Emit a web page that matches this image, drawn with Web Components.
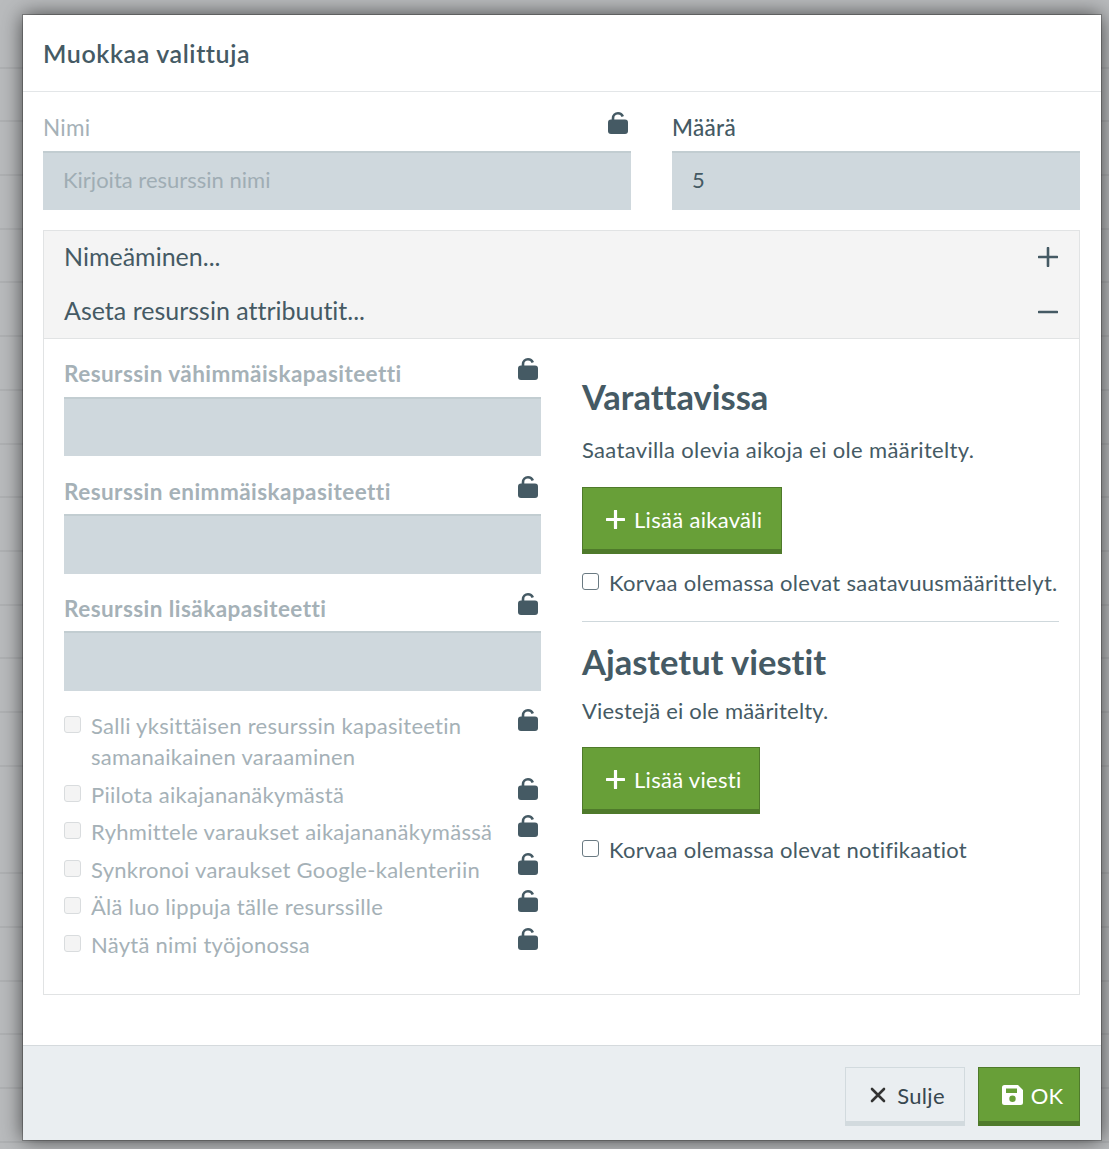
<!DOCTYPE html>
<html lang="fi">
<head>
<meta charset="utf-8">
<title>Muokkaa valittuja</title>
<style>
    html, body { margin: 0; height: 100%; }
    body {
        height: 1149px;
        overflow: hidden;
        font-family: Lato, "Open Sans", sans-serif;
        font-variant-ligatures: none;
        color: #455a64;
        background-color: #b9bbbd;
        background-image: repeating-linear-gradient(to bottom, transparent 0, transparent 52.7px, #a4a6a8 52.7px, #a4a6a8 53.7px);
        background-position: 0 14.500px;
    }
</style>
</head>
<body>
<template id="lock-tpl">
    <style>
        :host { display: inline-block; flex: none; width: 20px; height: 22px; color: #455a64; }
        svg { display: block; width: 100%; height: 100%; }
    </style>
    <svg viewBox="0 0 20 22">
        <path d="M5 8.500V6.300C5 3.200 7.200 1.300 10 1.300c2.200 0 3.900 1 4.800 3.200" fill="none" stroke="currentColor" stroke-width="2.600"/>
        <rect x="0" y="7.500" width="20" height="14.500" rx="3" fill="currentColor"/>
    </svg>
</template>

<script>
class LockIcon extends HTMLElement {
    constructor(){
        super();
        this.attachShadow({mode: 'open'});
        this.shadowRoot.appendChild(document.getElementById('lock-tpl').content.cloneNode(true));
    }
}

class TextField extends HTMLElement {
    constructor(){
        super();
        this.attachShadow({mode: 'open'});
        this.shadowRoot.innerHTML = `
        <style>
            :host { display: block; }
            .head { display: flex; justify-content: space-between; align-items: flex-end; height: var(--head, 58px); }
            label { font-size: 22.5px; font-weight: 500; letter-spacing: .3px; line-height: 25px; margin-bottom: var(--label-gap, 11px); }
            :host([disabled]) label { color: #a5b1b7; font-weight: 400; }
            :host([strong]) label { font-weight: 700; letter-spacing: .45px; }
            ::slotted(wc-lock) { margin: 0 3px var(--lock-gap, 17px) 0; }
            .box {
                box-sizing: border-box;
                height: var(--box, 59px);
                background: #cfd8dd;
                border-top: 2px solid #c2cdd1;
                padding: 0 20px 5px;
                display: flex;
                align-items: center;
                font-size: 22px;
            }
            .ph { color: #9fadb4; }
        </style>
        <div class="head"><label></label><slot name="lock"></slot></div>
        <div class="box"><span class="val"></span></div>`;
    }

    connectedCallback(){
        this.shadowRoot.querySelector('label').textContent = this.getAttribute('label');
        const val = this.shadowRoot.querySelector('.val');
        if(this.hasAttribute('placeholder')) {
            val.textContent = this.getAttribute('placeholder');
            val.className = 'val ph';
        }
        if(this.hasAttribute('value')) {
            val.textContent = this.getAttribute('value');
        }
    }
}

class CheckRow extends HTMLElement {
    constructor(){
        super();
        this.attachShadow({mode: 'open'});
        this.shadowRoot.innerHTML = `
        <style>
            :host { display: flex; align-items: flex-start; font-size: 22px; letter-spacing: .27px; line-height: 31px; }
            .check {
                box-sizing: border-box;
                flex: none;
                width: 17px;
                height: 17px;
                margin: 6px 10px 0 0;
                border: 1.5px solid #6a7a82;
                border-radius: 3px;
                background: #fff;
            }
            :host([disabled]) { color: #a5b1b7; }
            :host([disabled]) .check { border-color: #d9dcde; background: #f4f4f4; }
            .text { flex: 1; }
            ::slotted(wc-lock) { margin: -1px 3px 0 0; }
        </style>
        <span class="check"></span>
        <span class="text"><slot></slot></span>
        <slot name="lock"></slot>`;
    }
}

class ActionButton extends HTMLElement {
    constructor(){
        super();
        this.attachShadow({mode: 'open'});
        this.shadowRoot.innerHTML = `
        <style>
            :host {
                display: inline-flex;
                box-sizing: border-box;
                align-items: center;
                height: 67px;
                padding: 2px 19px 0 23px;
                gap: 9px;
                font-size: 22px;
                letter-spacing: .3px;
                color: #fff;
                background: #689f38;
                border: 1px solid #4f7a2b;
                border-bottom: 5px solid #4f7a2b;
            }
            :host([plain]) {
                color: #37474f;
                background: #eaeef1;
                border-color: #d2dade;
                border-bottom-color: #d2dade;
            }
            ::slotted(svg) { display: block; flex: none; }
        </style>
        <slot name="icon"></slot><slot></slot>`;
    }
}

class AccordionRow extends HTMLElement {
    constructor(){
        super();
        this.attachShadow({mode: 'open'});
        this.shadowRoot.innerHTML = `
        <style>
            :host {
                display: flex;
                align-items: center;
                justify-content: space-between;
                height: 54px;
                padding: 0 21px 0 20px;
                font-size: 25px;
                color: #455a64;
            }
            span { margin-bottom: 4px; }
            ::slotted(svg) { display: block; }
        </style>
        <span><slot></slot></span><slot name="icon"></slot>`;
    }
}

class EditModal extends HTMLElement {
    constructor(){
        super();
        this.attachShadow({mode: 'open'});
        this.shadowRoot.innerHTML = `
        <style>
            :host {
                display: flex;
                flex-direction: column;
                box-sizing: border-box;
                width: 1078px;
                height: 1125px;
                margin: 15px 0 0 23px;
                background: #fff;
                box-shadow: 0 0 0 1px rgba(0,0,0,.25), 0 0 20px rgba(0,0,0,.65);
            }
            header {
                box-sizing: border-box;
                height: 77px;
                padding: 0 20px;
                display: flex;
                align-items: center;
                border-bottom: 1px solid #e3e6e8;
                font-size: 25px;
                font-weight: 600;
                letter-spacing: .6px;
            }
            main { flex: 1; padding: 0 21px 0 20px; }
            footer {
                box-sizing: border-box;
                height: 95px;
                background: #eaeef1;
                border-top: 1px solid #d5dadd;
                padding: 21px 21px 0 0;
                display: flex;
                justify-content: flex-end;
                gap: 13px;
            }
        </style>
        <header><slot name="title"></slot></header>
        <main><slot></slot></main>
        <footer><slot name="footer"></slot></footer>`;
    }
}

customElements.define('wc-lock', LockIcon);
customElements.define('wc-field', TextField);
customElements.define('wc-check', CheckRow);
customElements.define('wc-button', ActionButton);
customElements.define('wc-accordion-row', AccordionRow);
customElements.define('wc-modal', EditModal);
</script>

<style>
    .top { display: grid; grid-template-columns: 588px 408px; column-gap: 41px; padding-top: 1px; }
    .panel { margin-top: 20px; border: 1px solid #e1e3e4; }
    .panel-head { background: #f4f4f4; border-bottom: 1px solid #e1e3e4; }
    .panel-head wc-accordion-row + wc-accordion-row { height: 53px; }
    .panel-body { display: grid; grid-template-columns: 477px 477px; column-gap: 41px; padding: 0 20px; height: 655px; }
    .checks { margin-top: 19px; display: flex; flex-direction: column; gap: 6.6px; }
    h2 { margin: 0; font-size: 34.500px; font-weight: 700; line-height: 40px; color: #455a64; }
    p { margin: 0; font-size: 22px; letter-spacing: .33px; line-height: 30px; }
    hr { border: 0; border-top: 1px solid #cfd8dc; margin: 23px 0 20px; }
    .tall { --box: 60px; --label-gap: 10px; --lock-gap: 16px; }
</style>

<wc-modal>
    <span slot="title">Muokkaa valittuja</span>

    <div class="top">
        <wc-field disabled label="Nimi" placeholder="Kirjoita resurssin nimi"><wc-lock slot="lock"></wc-lock></wc-field>
        <wc-field label="Määrä" value="5"></wc-field>
    </div>

    <div class="panel">
        <div class="panel-head">
            <wc-accordion-row>Nimeäminen...
                <svg slot="icon" style="margin-bottom:2px" width="20" height="20" viewBox="0 0 20 20"><path d="M10 1v18M1 10h18" stroke="#455a64" stroke-width="2.600" stroke-linecap="round"/></svg>
            </wc-accordion-row>
            <wc-accordion-row>Aseta resurssin attribuutit...
                <svg slot="icon" width="20" height="20" viewBox="0 0 20 20"><path d="M1 10h18" stroke="#455a64" stroke-width="2.600" stroke-linecap="round"/></svg>
            </wc-accordion-row>
        </div>
        <div class="panel-body">
            <div>
                <wc-field disabled strong label="Resurssin vähimmäiskapasiteetti"><wc-lock slot="lock"></wc-lock></wc-field>
                <wc-field class="tall" disabled strong label="Resurssin enimmäiskapasiteetti"><wc-lock slot="lock"></wc-lock></wc-field>
                <wc-field class="tall" style="--head:57px" disabled strong label="Resurssin lisäkapasiteetti"><wc-lock slot="lock"></wc-lock></wc-field>
                <div class="checks">
                    <wc-check disabled>Salli yksittäisen resurssin kapasiteetin samanaikainen varaaminen<wc-lock slot="lock"></wc-lock></wc-check>
                    <wc-check disabled>Piilota aikajananäkymästä<wc-lock slot="lock"></wc-lock></wc-check>
                    <wc-check disabled>Ryhmittele varaukset aikajananäkymässä<wc-lock slot="lock"></wc-lock></wc-check>
                    <wc-check disabled>Synkronoi varaukset Google-kalenteriin<wc-lock slot="lock"></wc-lock></wc-check>
                    <wc-check disabled>Älä luo lippuja tälle resurssille<wc-lock slot="lock"></wc-lock></wc-check>
                    <wc-check disabled>Näytä nimi työjonossa<wc-lock slot="lock"></wc-lock></wc-check>
                </div>
            </div>
            <div>
                <h2 style="margin-top:38px">Varattavissa</h2>
                <p style="margin-top:18px">Saatavilla olevia aikoja ei ole määritelty.</p>
                <wc-button style="margin-top:22px">
                    <svg slot="icon" width="19" height="19" viewBox="0 0 19 19"><path d="M9.500 1v17M1 9.500h17" stroke="#fff" stroke-width="3.200" stroke-linecap="round"/></svg>
                    Lisää aikaväli
                </wc-button>
                <wc-check style="margin-top:13px">Korvaa olemassa olevat saatavuusmäärittelyt.</wc-check>
                <hr>
                <h2>Ajastetut viestit</h2>
                <p style="margin-top:14px;letter-spacing:.18px">Viestejä ei ole määritelty.</p>
                <wc-button style="margin-top:21px;padding-right:17px">
                    <svg slot="icon" width="19" height="19" viewBox="0 0 19 19"><path d="M9.500 1v17M1 9.500h17" stroke="#fff" stroke-width="3.200" stroke-linecap="round"/></svg>
                    Lisää viesti
                </wc-button>
                <wc-check style="margin-top:20px">Korvaa olemassa olevat notifikaatiot</wc-check>
            </div>
        </div>
    </div>

    <wc-button slot="footer" plain style="height:59px;padding:1px 19px 0 24px;gap:11px">
        <svg slot="icon" width="16" height="16" viewBox="0 0 16 16"><path d="M2 2l12 12M14 2L2 14" stroke="#333" stroke-width="2.600" stroke-linecap="round"/></svg>
        Sulje
    </wc-button>
    <wc-button slot="footer" style="height:59px;padding:1px 16px 0 23px;gap:8px;letter-spacing:0">
        <svg slot="icon" width="21" height="20" viewBox="0 0 21 20"><path fill="#fff" fill-rule="evenodd" d="M2.500 0H16l5 5v12.500a2.500 2.500 0 0 1-2.500 2.500h-16A2.500 2.500 0 0 1 0 17.500v-15A2.500 2.500 0 0 1 2.500 0zM4 3.500v4.500h11V3.500zM10.500 10.500a3.200 3.200 0 1 0 0 6.400 3.200 3.200 0 0 0 0-6.400z"/></svg>
        OK
    </wc-button>
</wc-modal>
</body>
</html>
